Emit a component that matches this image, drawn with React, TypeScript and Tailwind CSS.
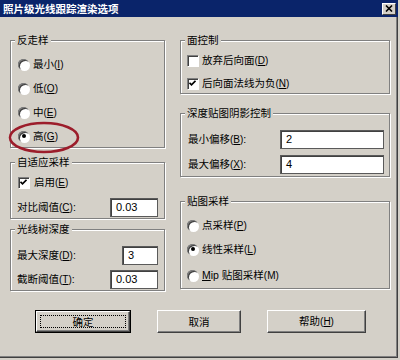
import React from "react";

// Win2000-style render options dialog

const Mn = ({ k }: { k: string }) => (
  <span className="text-[10px]">
    (<span className="underline underline-offset-1">{k}</span>)
  </span>
);

function Radio({ checked }: { checked?: boolean }) {
  return (
    <span className="w-[11px] h-[11px] shrink-0 rounded-full bg-white shadow-[inset_1px_1px_0_#808080,inset_2px_2px_0_#404040,1px_1px_0_#fff] flex items-center justify-center">
      {checked && <span className="w-[4px] h-[4px] rounded-full bg-black" />}
    </span>
  );
}

function Check({ checked }: { checked?: boolean }) {
  return (
    <span className="w-[11px] h-[11px] shrink-0 bg-white shadow-[inset_1px_1px_0_#808080,inset_2px_2px_0_#404040,1px_1px_0_#fff] flex items-center justify-center">
      {checked && (
        <svg width="7" height="7" viewBox="0 0 7 7">
          <path d="M0.5 2.8 L2.5 4.8 L6.5 0.8" stroke="#000" strokeWidth="1.7" fill="none" />
        </svg>
      )}
    </span>
  );
}

function Field({ value, className }: { value: string; className: string }) {
  return (
    <div
      className={
        "h-[19px] bg-white border border-[#5a5a5a] shadow-[inset_1px_1px_0_#404040] pl-[5px] flex items-center text-[11px] " +
        className
      }
    >
      {value}
    </div>
  );
}

function Group({
  title,
  className,
  children,
}: {
  title: string;
  className: string;
  children?: React.ReactNode;
}) {
  return (
    <div
      className={
        "relative border border-[#808080] shadow-[inset_1px_1px_0_#fff,1px_1px_0_#fff] " + className
      }
    >
      <span className="absolute left-[4px] top-[-8px] px-[2px] bg-[#d4d0c8] leading-[14px]">
        {title}
      </span>
      {children}
    </div>
  );
}

function Btn({
  children,
  className,
  isDefault,
}: {
  children: React.ReactNode;
  className: string;
  isDefault?: boolean;
}) {
  const face = (
    <div className="h-full border-t border-l border-t-white border-l-white border-r border-b border-r-[#404040] border-b-[#404040] shadow-[inset_-1px_-1px_0_#808080] p-[3px] flex">
      <div
        className={
          "flex-1 flex items-center justify-center " +
          (isDefault ? "border border-dotted border-black" : "")
        }
      >
        {children}
      </div>
    </div>
  );
  if (isDefault)
    return <div className={"h-[23px] border border-black " + className}>{face}</div>;
  return <div className={"h-[23px] " + className}>{face}</div>;
}

export default function App() {
  return (
    <div className="w-[400px] h-[360px] bg-[#d4d0c8] overflow-hidden text-black text-[10.5px] leading-[14px] font-['Liberation_Sans','Noto_Sans_CJK_SC',sans-serif]">
      {/* title bar */}
      <div className="w-[398px] h-[17px] bg-[#0a246a] flex items-center justify-between pl-[3px] pr-[2px]">
        <span className="text-white font-bold">照片级光线跟踪渲染选项</span>
        <div className="w-[14px] h-[12px] bg-[#d4d0c8] border-t border-l border-t-white border-l-white border-r border-b border-r-[#404040] border-b-[#404040] flex items-center justify-center">
          <svg width="8" height="7" viewBox="0 0 8 7">
            <path d="M1 0.5 L7 6.5 M7 0.5 L1 6.5" stroke="#000" strokeWidth="1.6" />
          </svg>
        </div>
      </div>

      <div className="w-[398px] h-[341px] border-r border-b border-[#404040] shadow-[inset_-1px_-1px_0_#808080] pt-[23px] pl-[10px]">
        <div className="flex items-start">
          {/* left column */}
          <div className="w-[155px] flex flex-col">
            <Group title="反走样" className="h-[108px] pt-[11px]">
              {[
                ["最小", "I", false],
                ["低", "O", false],
                ["中", "E", false],
                ["高", "G", true],
              ].map(([label, k, on]) => (
                <div key={k as string} className="h-[24px] flex items-center pl-[7px] gap-[4px]">
                  <Radio checked={on as boolean} />
                  <span>
                    {label}
                    <Mn k={k as string} />
                  </span>
                </div>
              ))}
              <svg
                className="absolute left-[-3px] top-[80px]"
                width="72"
                height="33"
                viewBox="0 0 72 33"
              >
                <ellipse cx="36" cy="16.5" rx="34" ry="14.5" fill="none" stroke="#9c1d2b" strokeWidth="2.6" />
              </svg>
            </Group>

            <Group title="自适应采样" className="h-[57px] mt-[14px] pt-[9px]">
              <div className="h-[20px] flex items-center pl-[7px] gap-[5px]">
                <Check checked />
                <span>
                  启用
                  <Mn k="E" />
                </span>
              </div>
              <div className="h-[20px] mt-[5px] flex items-center justify-between pl-[6px] pr-[6px]">
                <span>
                  对比阈值
                  <Mn k="C" />:
                </span>
                <Field value="0.03" className="w-[48px]" />
              </div>
            </Group>

            <Group title="光线树深度" className="h-[62px] mt-[10px] pt-[15px]">
              <div className="h-[20px] flex items-center justify-between pl-[6px] pr-[6px]">
                <span>
                  最大深度
                  <Mn k="D" />:
                </span>
                <Field value="3" className="w-[36px]" />
              </div>
              <div className="h-[20px] mt-[4px] flex items-center justify-between pl-[6px] pr-[6px]">
                <span>
                  截断阈值
                  <Mn k="T" />:
                </span>
                <Field value="0.03" className="w-[48px]" />
              </div>
            </Group>
          </div>

          {/* right column */}
          <div className="w-[210px] ml-[15px] flex flex-col">
            <Group title="面控制" className="h-[54px] pt-[9px]">
              <div className="h-[20px] flex items-center pl-[6px] gap-[4px]">
                <Check />
                <span>
                  放弃后向面
                  <Mn k="D" />
                </span>
              </div>
              <div className="h-[20px] mt-[3px] flex items-center pl-[6px] gap-[4px]">
                <Check checked />
                <span>
                  后向面法线为负
                  <Mn k="N" />
                </span>
              </div>
            </Group>

            <Group title="深度贴图阴影控制" className="h-[64px] mt-[19px] pt-[15px]">
              <div className="h-[20px] flex items-center justify-between pl-[7px] pr-[5px]">
                <span>
                  最小偏移
                  <Mn k="B" />:
                </span>
                <Field value="2" className="w-[104px]" />
              </div>
              <div className="h-[20px] mt-[5px] flex items-center justify-between pl-[7px] pr-[5px]">
                <span>
                  最大偏移
                  <Mn k="X" />:
                </span>
                <Field value="4" className="w-[104px]" />
              </div>
            </Group>

            <Group title="贴图采样" className="h-[88px] mt-[24px] pt-[11px]">
              <div className="h-[24px] flex items-center pl-[6px] gap-[4px]">
                <Radio />
                <span>
                  点采样
                  <Mn k="P" />
                </span>
              </div>
              <div className="h-[24px] flex items-center pl-[6px] gap-[4px]">
                <Radio checked />
                <span>
                  线性采样
                  <Mn k="L" />
                </span>
              </div>
              <div className="h-[24px] mt-[2px] flex items-center pl-[6px] gap-[4px]">
                <Radio />
                <span>
                  <span className="underline underline-offset-1">M</span>ip 贴图采样
                  <span className="text-[10px]">(M)</span>
                </span>
              </div>
            </Group>
          </div>
        </div>

        {/* buttons */}
        <div className="flex mt-[19px] ml-[25px]">
          <Btn isDefault className="w-[96px]">
            确定
          </Btn>
          <Btn className="w-[84px] ml-[26px]">取消</Btn>
          <Btn className="w-[99px] ml-[26px]">
            <span>
              帮助
              <Mn k="H" />
            </span>
          </Btn>
        </div>
      </div>
    </div>
  );
}
